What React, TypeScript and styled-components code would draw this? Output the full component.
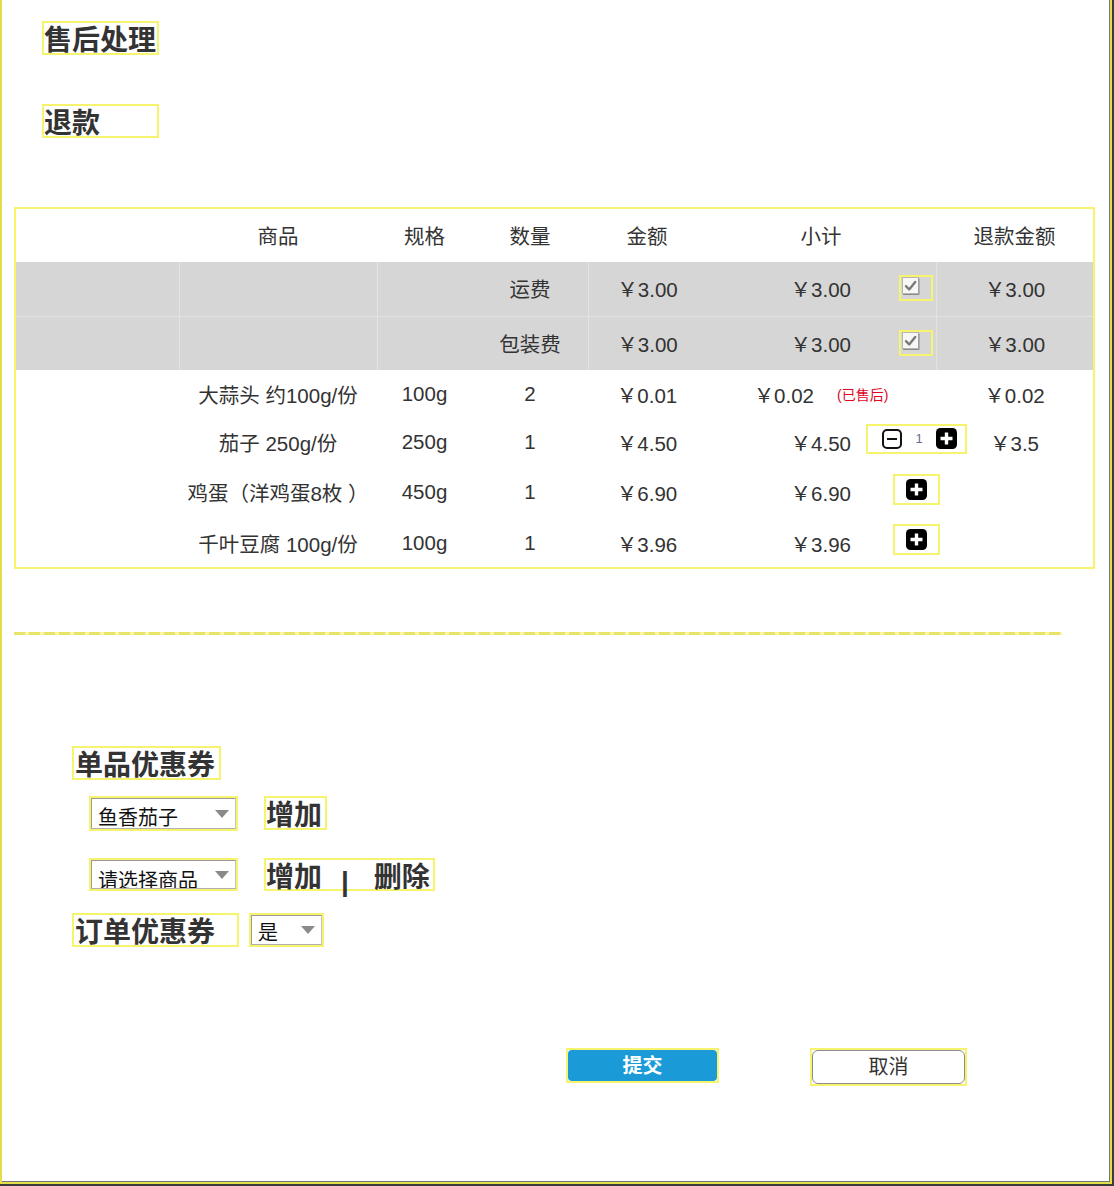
import React from "react";
import styled, { createGlobalStyle } from "styled-components";

const YELLOW = "#f6f36c";
const FONT = `"Liberation Sans", "Noto Sans CJK SC", sans-serif`;

const Global = createGlobalStyle`
  html, body { margin: 0; padding: 0; background: #fff; }
  body { font-family: ${FONT}; color: #333; }
  * { box-sizing: border-box; }
`;

const Frame = styled.div`
  width: 1114px;
  height: 1186px;
  border-right: 2px solid #3c3c3c;
  border-bottom: 2px solid #3c3c3c;
`;

const Inner = styled.div`
  height: 100%;
  border-left: 2px solid #e3dd48;
  border-right: 2px solid #e3dd48;
  border-bottom: 2px solid #e3dd48;
  box-shadow: inset -1px -1px 0 #777;
  display: flex;
  flex-direction: column;
  align-items: flex-start;
`;

const BoxTitle = styled.h1<{ $mt: number; $h: number }>`
  margin: ${(p) => p.$mt}px 0 0 40px;
  width: 117px;
  height: ${(p) => p.$h}px;
  border: 2px solid ${YELLOW};
  font: 700 28px/35px ${FONT};
  color: #333;
  padding: 0;
  white-space: nowrap;
`;

const Table = styled.div`
  margin: 69px 0 0 12px;
  width: 1081px;
  border: 2px solid ${YELLOW};
`;

const Row = styled.div<{ $h: number; $gray?: boolean; $topLine?: boolean }>`
  display: grid;
  grid-template-columns: 163px 198px 95px 116px 118px 230px 157px;
  height: ${(p) => p.$h}px;
  background: ${(p) => (p.$gray ? "#d6d6d6" : "transparent")};
  border-top: ${(p) => (p.$topLine ? "1px solid #e3e3e3" : "none")};
`;

const Cell = styled.div<{ $div?: boolean }>`
  display: flex;
  align-items: center;
  justify-content: center;
  font-size: 20.5px;
  color: #333;
  white-space: nowrap;
  min-width: 0;
  padding-bottom: 2px;
  border-left: ${(p) => (p.$div ? "1px solid #e3e3e3" : "none")};
`;

const SubtotalCell = styled.div<{ $sold?: boolean }>`
  display: flex;
  align-items: center;
  justify-content: ${(p) => (p.$sold ? "center" : "flex-start")};
  gap: ${(p) => (p.$sold ? "23px" : "0")};
  font-size: 20.5px;
  color: #333;
  white-space: nowrap;
  min-width: 0;
  padding-bottom: 2px;
`;

const Amount = styled.span`
  width: 145px;
  flex-shrink: 0;
  text-align: right;
`;

const ControlZone = styled.div`
  width: 130px;
  flex-shrink: 0;
  display: flex;
  justify-content: center;
  align-items: center;
`;

const SoldTag = styled.span`
  color: #e0061f;
  font-size: 14px;
`;

const CheckWrap = styled.div`
  width: 34px;
  height: 26px;
  border: 2px solid ${YELLOW};
  padding: 0 0 0 1px;
  display: flex;
  align-items: flex-start;
`;

const Stepper = styled.div`
  width: 101px;
  height: 30px;
  border: 2px solid ${YELLOW};
  padding-left: 14px;
  display: flex;
  align-items: center;
  margin-bottom: 7px;
`;

const StepValue = styled.span`
  font-size: 13px;
  color: #6b6b99;
  margin: 0 13px 0 14px;
`;

const PlusBox = styled.div`
  width: 47px;
  height: 31px;
  border: 2px solid ${YELLOW};
  display: flex;
  align-items: center;
  justify-content: center;
  margin-bottom: 6px;
`;

const DashLine = styled.div`
  margin: 63px 0 0 12px;
  width: 1048px;
  height: 3px;
  background: repeating-linear-gradient(90deg, #e9e368 0 11px, #faf7a2 11px 15px);
`;

const CouponTitle = styled.div<{ $w: number; $mt: number }>`
  width: ${(p) => p.$w}px;
  height: 34px;
  margin-top: ${(p) => p.$mt}px;
  border: 2px solid ${YELLOW};
  padding-left: 1px;
  font: 700 28px/35px ${FONT};
  color: #333;
  white-space: nowrap;
`;

const SingleCoupon = styled(CouponTitle)`
  margin-left: 70px;
`;

const SelectRow = styled.div<{ $mt: number }>`
  display: flex;
  align-items: flex-start;
  gap: 26px;
  margin: ${(p) => p.$mt}px 0 0 87px;
`;

const OrderRow = styled.div`
  display: flex;
  align-items: flex-start;
  gap: 10px;
  margin: 22px 0 0 70px;
`;

const SelectOutline = styled.div<{ $w: number; $h: number }>`
  width: ${(p) => p.$w}px;
  height: ${(p) => p.$h}px;
  border: 2px solid ${YELLOW};
`;

const SelectBox = styled.div`
  height: 100%;
  border: 1px solid #9a9a9a;
  border-right-color: #c4c4c4;
  border-bottom-color: #b0b0b0;
  background: #fff;
  display: flex;
  align-items: center;
  padding: 0 6px 0 6px;
  overflow: hidden;
`;

const SelectText = styled.span<{ $top: number }>`
  align-self: flex-start;
  margin-top: ${(p) => p.$top}px;
  font-size: 20px;
  line-height: 24px;
  color: #111;
  white-space: nowrap;
`;

const Arrow = styled.span`
  margin-left: auto;
  width: 0;
  height: 0;
  border-left: 7px solid transparent;
  border-right: 7px solid transparent;
  border-top: 8px solid #8a8a8a;
  flex-shrink: 0;
`;

const Action = styled.div<{ $h: number }>`
  height: ${(p) => p.$h}px;
  border: 2px solid ${YELLOW};
  padding: 0 3px 0 0;
  display: flex;
  align-items: flex-start;
  font: 700 28px/35px ${FONT};
  color: #333;
  white-space: nowrap;
`;

const Separator = styled.span`
  margin: 4px 25px 0 19px;
`;

const ButtonBar = styled.div`
  display: flex;
  align-items: flex-start;
  gap: 91px;
  margin: 101px 0 0 564px;
`;

const ButtonOutline = styled.div<{ $w: number; $h: number }>`
  width: ${(p) => p.$w}px;
  height: ${(p) => p.$h}px;
  border: 2px solid ${YELLOW};
`;

const SubmitFace = styled.button`
  width: 100%;
  height: 100%;
  border: none;
  border-radius: 4px;
  background: #1a9bd7;
  color: #fff;
  font: 700 20px/1 ${FONT};
  padding: 0;
  cursor: pointer;
`;

const CancelFace = styled.button`
  width: 100%;
  height: 100%;
  border: 1px solid #8c8c8c;
  border-radius: 6px;
  background: #fff;
  color: #333;
  font: 400 20px/1 ${FONT};
  padding: 0;
  cursor: pointer;
`;

const CheckIcon = () => (
  <svg width="18" height="18" viewBox="0 0 18 18">
    <rect x="0.5" y="0.5" width="16" height="16" fill="#f7f7f7" stroke="#b5b5b5" />
    <path d="M17 1.5v16h-16" fill="none" stroke="#8a8a8a" strokeWidth="1" />
    <path d="M4 9.2l3.2 3.3 6-7.5" fill="none" stroke="#7a7a7a" strokeWidth="2.4" strokeLinecap="round" strokeLinejoin="round" />
  </svg>
);

const MinusIcon = () => (
  <svg width="20" height="20" viewBox="0 0 20 20">
    <rect x="1" y="1" width="18" height="18" rx="4" fill="#fff" stroke="#111" strokeWidth="2" />
    <path d="M5 10h10" stroke="#111" strokeWidth="2" />
  </svg>
);

const PlusIcon = () => (
  <svg width="21" height="21" viewBox="0 0 21 21">
    <rect x="0" y="0" width="21" height="21" rx="4.5" fill="#000" />
    <path d="M10.5 4.5v12M4.5 10.5h12" stroke="#fff" strokeWidth="3.4" />
  </svg>
);

type Item = {
  name: string;
  spec: string;
  qty: string;
  price: string;
  subtotal: string;
  refund: string;
  h: number;
  kind: "sold" | "stepper" | "plus";
};

const items: Item[] = [
  { name: "大蒜头 约100g/份", spec: "100g", qty: "2", price: "￥0.01", subtotal: "￥0.02", refund: "￥0.02", h: 50, kind: "sold" },
  { name: "茄子 250g/份", spec: "250g", qty: "1", price: "￥4.50", subtotal: "￥4.50", refund: "￥3.5", h: 46, kind: "stepper" },
  { name: "鸡蛋（洋鸡蛋8枚 ）", spec: "450g", qty: "1", price: "￥6.90", subtotal: "￥6.90", refund: "", h: 54, kind: "plus" },
  { name: "千叶豆腐 100g/份", spec: "100g", qty: "1", price: "￥3.96", subtotal: "￥3.96", refund: "", h: 47, kind: "plus" },
];

const fees = [
  { label: "运费", amount: "￥3.00" },
  { label: "包装费", amount: "￥3.00" },
];

export default function App() {
  return (
    <>
      <Global />
      <Frame>
        <Inner>
          <BoxTitle $mt={21} $h={34}>售后处理</BoxTitle>
          <BoxTitle $mt={49} $h={34}>退款</BoxTitle>

          <Table>
            <Row $h={53}>
              <Cell />
              <Cell>商品</Cell>
              <Cell>规格</Cell>
              <Cell>数量</Cell>
              <Cell>金额</Cell>
              <Cell>小计</Cell>
              <Cell>退款金额</Cell>
            </Row>
            {fees.map((f, i) => (
              <Row key={f.label} $h={54} $gray $topLine={i > 0}>
                <Cell />
                <Cell $div />
                <Cell $div />
                <Cell>{f.label}</Cell>
                <Cell $div>{f.amount}</Cell>
                <SubtotalCell>
                  <Amount>{f.amount}</Amount>
                  <ControlZone>
                    <CheckWrap>
                      <CheckIcon />
                    </CheckWrap>
                  </ControlZone>
                </SubtotalCell>
                <Cell $div>{f.amount}</Cell>
              </Row>
            ))}
            {items.map((it) => (
              <Row key={it.name} $h={it.h}>
                <Cell />
                <Cell>{it.name}</Cell>
                <Cell>{it.spec}</Cell>
                <Cell>{it.qty}</Cell>
                <Cell>{it.price}</Cell>
                {it.kind === "sold" ? (
                  <SubtotalCell $sold>
                    <span>{it.subtotal}</span>
                    <SoldTag>(已售后)</SoldTag>
                  </SubtotalCell>
                ) : (
                  <SubtotalCell>
                    <Amount>{it.subtotal}</Amount>
                    <ControlZone>
                      {it.kind === "stepper" ? (
                        <Stepper>
                          <MinusIcon />
                          <StepValue>1</StepValue>
                          <PlusIcon />
                        </Stepper>
                      ) : (
                        <PlusBox>
                          <PlusIcon />
                        </PlusBox>
                      )}
                    </ControlZone>
                  </SubtotalCell>
                )}
                <Cell>{it.refund}</Cell>
              </Row>
            ))}
          </Table>

          <DashLine />

          <SingleCoupon $w={149} $mt={111}>单品优惠券</SingleCoupon>

          <SelectRow $mt={16}>
            <SelectOutline $w={149} $h={35}>
              <SelectBox>
                <SelectText $top={7}>鱼香茄子</SelectText>
                <Arrow />
              </SelectBox>
            </SelectOutline>
            <Action $h={34}>增加</Action>
          </SelectRow>

          <SelectRow $mt={27}>
            <SelectOutline $w={149} $h={33}>
              <SelectBox>
                <SelectText $top={8}>请选择商品</SelectText>
                <Arrow />
              </SelectBox>
            </SelectOutline>
            <Action $h={33}>
              增加<Separator>|</Separator>删除
            </Action>
          </SelectRow>

          <OrderRow>
            <CouponTitle $w={167} $mt={0}>订单优惠券</CouponTitle>
            <SelectOutline $w={75} $h={34}>
              <SelectBox>
                <SelectText $top={5}>是</SelectText>
                <Arrow />
              </SelectBox>
            </SelectOutline>
          </OrderRow>

          <ButtonBar>
            <ButtonOutline $w={153} $h={35}>
              <SubmitFace>提交</SubmitFace>
            </ButtonOutline>
            <ButtonOutline $w={157} $h={38}>
              <CancelFace>取消</CancelFace>
            </ButtonOutline>
          </ButtonBar>
        </Inner>
      </Frame>
    </>
  );
}
